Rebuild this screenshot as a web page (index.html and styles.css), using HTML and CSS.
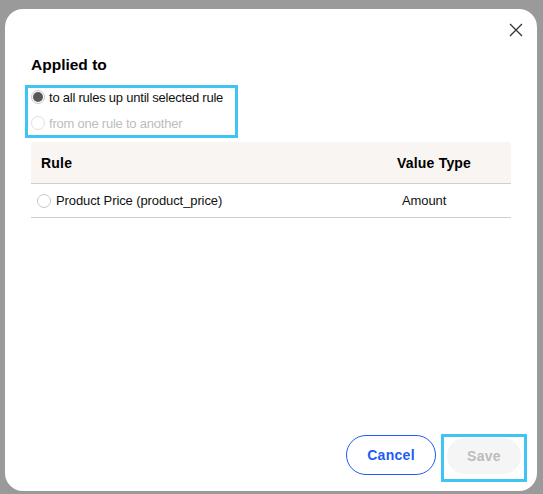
FILE: index.html
```html
<!DOCTYPE html>
<html>
<head>
<meta charset="utf-8">
<link rel="stylesheet" href="styles.css">
</head>
<body>
<div class="modal">
  <button class="close" aria-label="Close">
    <svg width="14" height="14" viewBox="0 0 14 14"><path d="M1 1L13 13M13 1L1 13" stroke="#333" stroke-width="1.3" fill="none"/></svg>
  </button>
  <h2 class="title">Applied to</h2>
  <div class="radio-group">
    <label class="opt"><span class="radio checked"></span><span>to all rules up until selected rule</span></label>
    <label class="opt disabled"><span class="radio"></span><span>from one rule to another</span></label>
  </div>
  <div class="table">
    <div class="thead">
      <div class="col-rule">Rule</div>
      <div class="col-type">Value Type</div>
    </div>
    <div class="trow">
      <div class="col-rule cell"><span class="radio"></span><span>Product Price (product_price)</span></div>
      <div class="col-type cell-type">Amount</div>
    </div>
  </div>
  <div class="footer">
    <button class="btn cancel">Cancel</button>
    <div class="save-wrap"><button class="btn save">Save</button></div>
  </div>
</div>
</body>
</html>
```
FILE: styles.css
```css
html, body {
  margin: 0;
  padding: 0;
  background: #9a9a9a;
  font-family: "Liberation Sans", Arial, sans-serif;
}
.modal {
  position: relative;
  box-sizing: border-box;
  margin: 9px 0 0 5px;
  width: 532px;
  height: 482px;
  background: #fff;
  border-radius: 18px;
  padding: 47px 26px 9px 26px;
  display: flex;
  flex-direction: column;
}
.close {
  position: absolute;
  top: 14px;
  right: 14px;
  width: 14px;
  height: 14px;
  padding: 0;
  border: 0;
  background: none;
  display: flex;
}
.title {
  margin: 0;
  font-size: 15.5px;
  font-weight: 700;
  color: #000;
  line-height: 18px;
}
.radio-group {
  margin: 11px 0 0 -6px;
  width: 213px;
  height: 53px;
  box-sizing: border-box;
  border: 3px solid #3fc4f4;
  padding: 0 0 0 3px;
  display: flex;
  flex-direction: column;
  gap: 8px;
}
.opt {
  display: flex;
  align-items: center;
  height: 18px;
  gap: 4px;
  font-size: 13px;
  letter-spacing: -0.23px;
  color: #111;
}
.opt.disabled {
  color: #bdbdbd;
}
.radio {
  width: 12px;
  height: 12px;
  border: 1px solid #c8c8c8;
  border-radius: 50%;
  background: #fff;
  position: relative;
  flex: none;
}
.radio.checked::after {
  content: "";
  position: absolute;
  left: 1px;
  top: 1px;
  width: 10px;
  height: 10px;
  border-radius: 50%;
  background: #585858;
}
.opt.disabled .radio {
  border-color: #e0e0e0;
}
.table {
  margin-top: 4px;
  width: 480px;
}
.thead {
  display: flex;
  align-items: center;
  height: 41px;
  background: #f8f5f2;
  border-radius: 4px 4px 0 0;
  border-bottom: 1px solid #cfcfcf;
  font-size: 14px;
  letter-spacing: 0.2px;
  font-weight: 700;
  color: #000;
}
.thead .col-rule {
  padding-left: 10px;
  flex: 1;
}
.thead .col-type {
  width: 114px;
}
.trow {
  display: flex;
  align-items: center;
  height: 33px;
  border-bottom: 1px solid #cfcfcf;
  font-size: 13px;
  letter-spacing: -0.1px;
  color: #111;
}
.cell {
  flex: 1;
  display: flex;
  align-items: center;
  gap: 5px;
  padding-left: 6px;
}
.cell-type {
  width: 109px;
}
.footer {
  margin-top: auto;
  display: flex;
  justify-content: flex-end;
  align-items: center;
  gap: 5px;
  margin-right: -16px;
}
.btn {
  font-family: "Liberation Sans", Arial, sans-serif;
  font-size: 14px;
  letter-spacing: 0.3px;
  font-weight: 700;
  border-radius: 20px;
  cursor: pointer;
}
.cancel {
  width: 90px;
  height: 40px;
  border: 1px solid #1d5cf5;
  background: #fff;
  color: #1d5cf5;
  margin-top: -7px;
}
.save-wrap {
  box-sizing: border-box;
  width: 86px;
  height: 48px;
  border: 3px solid #3fc4f4;
  padding: 1px 3px 5px 3px;
  display: flex;
}
.save {
  width: 74px;
  height: 36px;
  border: 0;
  background: #f5f5f5;
  color: #bcbcbc;
}
```
